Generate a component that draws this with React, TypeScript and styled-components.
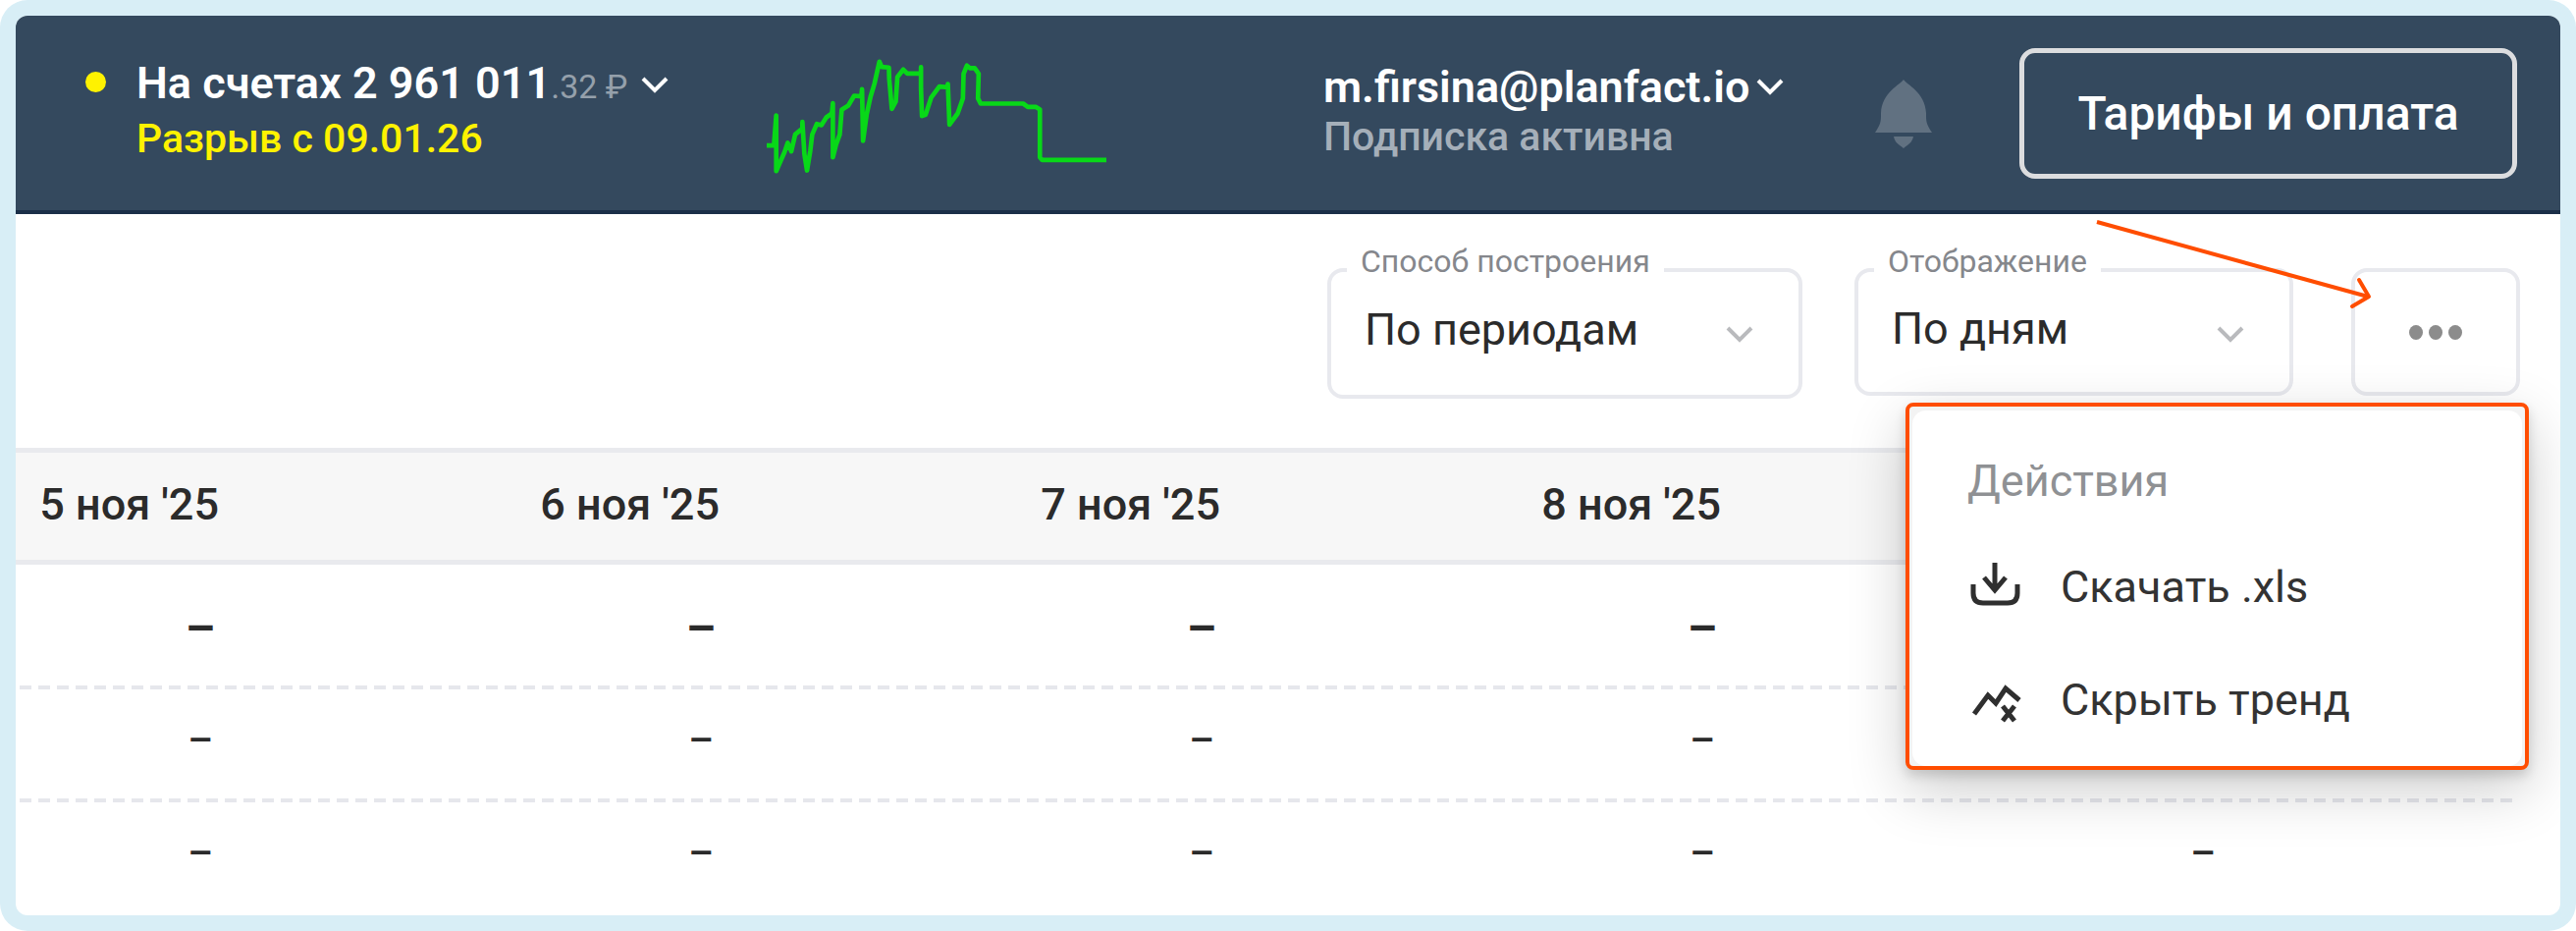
import React from 'react';
import styled, { createGlobalStyle } from 'styled-components';

const GlobalStyle = createGlobalStyle`
  *, *::before, *::after { box-sizing: border-box; }
  body {
    margin: 0;
    background: #fff;
    color: #2b2b2b;
    font-family: Roboto, "Liberation Sans", sans-serif;
    font-size: 45px;
  }
  button, select { font: inherit; color: inherit; }
`;

const Frame = styled.div`
  padding: 16px;
  border-radius: 28px;
  background: #d8eef6;
`;

const Screen = styled.main`
  min-height: calc(100vh - 32px);
  overflow: hidden;
  border-radius: 12px;
  background: #fff;
`;

const TopBar = styled.header`
  display: grid;
  grid-template-columns: 694fr 567fr 562fr 147fr 507fr;
  align-items: start;
  min-height: 202px;
  padding: 0 44px 0 71px;
  border-bottom: 4px solid #1b2f48;
  background: #34495e;
  color: #fff;
`;

const Balance = styled.div`
  display: flex;
  align-items: flex-start;
  gap: 31px;
  margin-top: 42px;
  line-height: 53px;
  white-space: nowrap;
`;

const StatusDot = styled.span`
  width: 21px;
  height: 21px;
  margin-top: 15px;
  border-radius: 50%;
  background: #fff200;
`;

const Account = styled.div`
  margin-top: 47px;
  line-height: 51px;
  white-space: nowrap;
`;

const MenuTrigger = styled.button<{ $gap: number }>`
  display: flex;
  align-items: center;
  gap: ${({ $gap }) => $gap}px;
  padding: 0;
  border: 0;
  background: none;
  font-weight: 600;
  line-height: inherit;
  cursor: pointer;
`;

const Cents = styled.span`
  color: #95a0ab;
  font-size: 34px;
  font-weight: 400;
`;

const Caption = styled.div<{ $color: string }>`
  color: ${({ $color }) => $color};
  font-size: 41px;
  font-weight: 500;
`;

const Sparkline = styled.svg`
  width: 346px;
  height: 117px;
  margin-top: 44px;
`;

const BellButton = styled.button`
  display: flex;
  width: 58px;
  margin-top: 65px;
  padding: 0;
  border: 0;
  background: none;
  cursor: pointer;
`;

const PlansButton = styled.button`
  height: 133px;
  margin-top: 33px;
  border: 5px solid #dcdddf;
  border-radius: 16px;
  background: none;
  font-size: 48px;
  font-weight: 500;
  white-space: nowrap;
  cursor: pointer;
`;

const Toolbar = styled.div`
  display: flex;
  justify-content: flex-end;
  align-items: flex-start;
  padding: 55px 41px 50px;
`;

const Field = styled.div<{ $width: number; $height: number; $after: number }>`
  position: relative;
  width: ${({ $width }) => $width}px;
  height: ${({ $height }) => $height}px;
  margin-right: ${({ $after }) => $after}px;
`;

const FieldLabel = styled.label`
  position: absolute;
  top: -25px;
  left: 20px;
  padding: 0 14px;
  background: #fff;
  color: #85878c;
  font-size: 32px;
  line-height: 36px;
`;

const Select = styled.select`
  width: 100%;
  height: 100%;
  padding: 0 90px 8px 34px;
  border: 4px solid #e8e9ee;
  border-radius: 16px;
  background: #fff;
  appearance: none;
`;

const SelectArrow = styled.span`
  position: absolute;
  top: 58px;
  right: 50px;
  display: flex;
  pointer-events: none;
`;

const MoreArea = styled.div`
  position: relative;
`;

const MoreButton = styled.button`
  display: flex;
  align-items: center;
  justify-content: center;
  gap: 6px;
  width: 172px;
  height: 130px;
  border: 4px solid #e8e9ee;
  border-radius: 16px;
  background: #fff;
  cursor: pointer;
`;

const MoreDot = styled.span`
  width: 14px;
  height: 15px;
  border-radius: 50%;
  background: #8c8c8c;
`;

const Pointer = styled.svg`
  position: absolute;
  z-index: 3;
  top: -51px;
  right: 147px;
  pointer-events: none;
`;

const MenuFrame = styled.div`
  position: absolute;
  z-index: 2;
  top: 137px;
  right: -9px;
  width: 635px;
  padding: 4px 3px 0;
  border: 4px solid #ff4d00;
  border-radius: 8px;
  background: #f3f3f3;
  box-shadow: 0 6px 12px rgba(0, 0, 0, 0.14), 0 20px 60px rgba(0, 0, 0, 0.2);
`;

const MenuPanel = styled.div`
  padding: 46px 56px 10px;
  border-radius: 14px;
  background: #fff;
`;

const MenuTitle = styled.div`
  margin-bottom: 24px;
  color: #8f9194;
  line-height: 52px;
`;

const MenuItem = styled.button`
  display: flex;
  align-items: center;
  gap: 39px;
  width: 100%;
  height: 115px;
  padding: 0;
  border: 0;
  background: none;
  color: #333;
  white-space: nowrap;
  cursor: pointer;
`;

const Table = styled.table`
  width: calc(100% - 42px);
  border-spacing: 0;
  table-layout: fixed;
  color: #2b2b2b;
`;

const HeadCell = styled.th`
  height: 119px;
  padding: 0 303px 4px 0;
  border-top: 5px solid #e9eaee;
  border-bottom: 5px solid #e9eaee;
  background: #f7f7f7;
  font-weight: 500;
  text-align: right;
  white-space: nowrap;
`;

const Row = styled.tr<{ $total?: boolean; $last?: boolean }>`
  font-weight: ${({ $total }) => ($total ? 700 : 500)};
  background: ${({ $last }) =>
    $last ? 'none' : 'repeating-linear-gradient(90deg, #e6e7ec 0 12px, transparent 12px 19px) 4px 100% / calc(100% - 8px) 4px no-repeat'};
`;

const Cell = styled.td<{ $total?: boolean }>`
  height: ${({ $total }) => ($total ? 127 : 115)}px;
  padding: ${({ $total }) => ($total ? '2px 307px 0 0' : '0 309px 12px 0')};
  font-size: ${({ $total }) => ($total ? 48 : 40)}px;
  line-height: 60px;
  text-align: right;
`;

const Chevron = ({ color }: { color: string }) => (
  <svg width="28" height="20" viewBox="0 0 28 20" fill="none" stroke={color} strokeWidth="4" aria-hidden="true">
    <path d="M2 3l12 12L26 3" />
  </svg>
);

const fields = [
  { id: 'method', label: 'Способ построения', value: 'По периодам', width: 484, height: 133, after: 53 },
  { id: 'scale', label: 'Отображение', value: 'По дням', width: 447, height: 130, after: 59 },
];

const days = ["5 ноя '25", "6 ноя '25", "7 ноя '25", "8 ноя '25", ''];
const rows = [
  ['–', '–', '–', '–', ''],
  ['–', '–', '–', '–', ''],
  ['–', '–', '–', '–', '–'],
];

const trend =
  'M123 384H145L152 292V462L165 432L177 405L187 376L198 402L210 350L232 332V312L238 410L246 460L256 400L262 350L276 318L290 322L305 298L322 286L325 255V420L335 380L346 350L352 275L372 262L390 232L412 234L414 212L417 370L428 290L440 235L452 195L467 128L474 144L496 146L497 180L505 272L517 250L522 175L540 152L552 164H594V145V210L597 294L608 290L625 238L650 204L676 206V196L681 320L706 286L722 240L724 165L734 140L744 148H758L770 165L768 240L776 256H906L920 266H944L957 274V420L964 428H1160';

export default function App() {
  return (
    <Frame>
      <GlobalStyle />
      <Screen>
        <TopBar>
          <Balance>
            <StatusDot />
            <div>
              <MenuTrigger type="button" $gap={14}>
                <span>
                  На счетах 2 961 011<Cents>.32 ₽</Cents>
                </span>
                <Chevron color="#fff" />
              </MenuTrigger>
              <Caption $color="#fff200">Разрыв с 09.01.26</Caption>
            </div>
          </Balance>
          <Sparkline viewBox="123 120 1037 350" fill="none" stroke="#08d818" strokeWidth="14" strokeLinejoin="round" role="img">
            <path d={trend} />
          </Sparkline>
          <Account>
            <MenuTrigger type="button" $gap={7}>
              <span>m.firsina@planfact.io</span>
              <Chevron color="#fff" />
            </MenuTrigger>
            <Caption $color="#a5afb9">Подписка активна</Caption>
          </Account>
          <BellButton type="button">
            <svg width="58" height="70" viewBox="0 0 58 70" fill="#617181" aria-hidden="true">
              <path d="M29 0C32 5 51 13 52 34C52 43 52 45 58 54H0C6 45 6 43 6 34C7 13 26 5 29 0Z" />
              <path d="M19 58H39C38 64 34 66 29 70C24 66 20 64 19 58Z" />
            </svg>
          </BellButton>
          <PlansButton type="button">Тарифы и оплата</PlansButton>
        </TopBar>

        <Toolbar>
          {fields.map((f) => (
            <Field key={f.id} $width={f.width} $height={f.height} $after={f.after}>
              <FieldLabel htmlFor={f.id}>{f.label}</FieldLabel>
              <Select id={f.id}>
                <option>{f.value}</option>
              </Select>
              <SelectArrow>
                <Chevron color="#b9babd" />
              </SelectArrow>
            </Field>
          ))}
          <MoreArea>
            <MoreButton type="button">
              <MoreDot />
              <MoreDot />
              <MoreDot />
            </MoreButton>
            <Pointer width="290" height="96" viewBox="0 0 290 96" fill="none" stroke="#ff4d00" strokeWidth="4" aria-hidden="true">
              <path d="M6 4L282 80" />
              <path d="M273 63L283 80L266 90" strokeLinejoin="round" strokeLinecap="round" />
            </Pointer>
            <MenuFrame>
              <MenuPanel>
                <MenuTitle>Действия</MenuTitle>
                <MenuItem type="button">
                  <svg width="56" height="56" viewBox="0 0 56 56" fill="none" stroke="#2f2f2f" strokeWidth="5" aria-hidden="true">
                    <path d="M28 3V30M17 18L28 31L39 18" />
                    <path d="M6 25V34Q6 44 16 44H41Q51 44 51 34V25" />
                  </svg>
                  Скачать .xls
                </MenuItem>
                <MenuItem type="button">
                  <svg width="56" height="56" viewBox="0 0 56 56" fill="none" stroke="#2f2f2f" strokeWidth="5" aria-hidden="true">
                    <path d="M7 42L21 23L29 31L39 16L53 28" />
                    <path d="M36 34L48 49M48 34L36 49" />
                  </svg>
                  Скрыть тренд
                </MenuItem>
              </MenuPanel>
            </MenuFrame>
          </MoreArea>
        </Toolbar>

        <Table>
          <thead>
            <tr>
              {days.map((day, i) => (
                <HeadCell key={i} scope="col">
                  {day}
                </HeadCell>
              ))}
            </tr>
          </thead>
          <tbody>
            {rows.map((values, r) => (
              <Row key={r} $total={r === 0} $last={r === rows.length - 1}>
                {values.map((value, c) => (
                  <Cell key={c} $total={r === 0}>
                    {value}
                  </Cell>
                ))}
              </Row>
            ))}
          </tbody>
        </Table>
      </Screen>
    </Frame>
  );
}
